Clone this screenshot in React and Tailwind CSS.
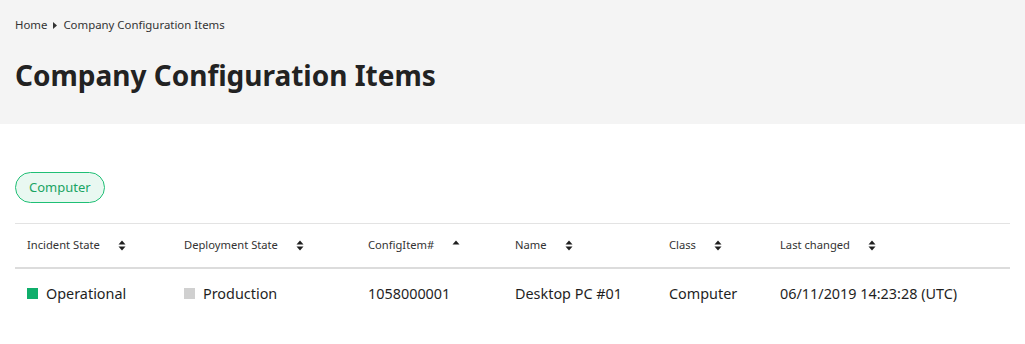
import React from 'react';

const SortIcon = ({ dir }) => (
  <svg width="8" height="11" viewBox="0 0 8 11" className="shrink-0 text-[#1f1f1f]">
    {dir !== 'down' && <path d="M0.5 4.5 L4 0.5 L7.5 4.5 Z" fill="currentColor" />}
    {dir !== 'up' && <path d="M0.5 6.5 L4 10.5 L7.5 6.5 Z" fill="currentColor" />}
  </svg>
);

const columns = [
  { label: 'Incident State', w: 'w-[157px]' },
  { label: 'Deployment State', w: 'w-[184px]' },
  { label: 'ConfigItem#', w: 'w-[147px]', sort: 'up' },
  { label: 'Name', w: 'w-[154px]' },
  { label: 'Class', w: 'w-[111px]' },
  { label: 'Last changed', w: 'flex-1' },
];

const App = () => {
  return (
    <div className="min-h-[344px] bg-white text-[#1f1f1f] font-['Noto_Sans',sans-serif]">
      <div className="bg-[#f4f4f4] h-[124px] px-[15px] pt-[17px]">
        <nav className="flex items-center gap-[6px] text-[11.4px] leading-[16px] text-[#333]">
          <span>Home</span>
          <svg width="4" height="7" viewBox="0 0 4 7"><path d="M0 0 L4 3.5 L0 7 Z" fill="#333" /></svg>
          <span>Company Configuration Items</span>
        </nav>
        <h1 className="mt-[23px] text-[28px] font-bold leading-[38px] text-[#222]">Company Configuration Items</h1>
      </div>

      <div className="px-[15px] pt-[48px]">
        <button className="h-[31px] px-[13px] rounded-full border border-[#1fbf75] bg-[#e9f8f1] text-[13px] text-[#19a463]">
          Computer
        </button>

        <div className="mt-[20px] w-[995px] border-t border-[#e3e3e3]">
          <div className="flex h-[45px] items-center border-b-2 border-[#dcdcdc] text-[11.2px] text-[#333]">
            {columns.map((c) => (
              <div key={c.label} className={`${c.w} flex items-center gap-[18px] pl-[12px]`}>
                <span>{c.label}</span>
                <SortIcon dir={c.sort} />
              </div>
            ))}
          </div>
          <div className="flex h-[50px] items-center text-[14.4px]">
            <div className="w-[157px] pl-[12px] flex items-center gap-[8px]">
              <span className="w-[11px] h-[11px] bg-[#0fae6b]" />
              <span>Operational</span>
            </div>
            <div className="w-[184px] pl-[12px] flex items-center gap-[8px]">
              <span className="w-[11px] h-[11px] bg-[#d0d0d0]" />
              <span>Production</span>
            </div>
            <div className="w-[147px] pl-[12px]">1058000001</div>
            <div className="w-[154px] pl-[12px]">Desktop PC #01</div>
            <div className="w-[111px] pl-[12px]">Computer</div>
            <div className="flex-1 pl-[12px]">06/11/2019 14:23:28 (UTC)</div>
          </div>
        </div>
      </div>
    </div>
  );
};

export default App;
